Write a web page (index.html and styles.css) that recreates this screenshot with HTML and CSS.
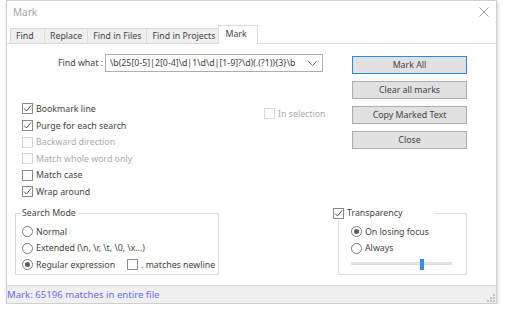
FILE: index.html
```html
<!DOCTYPE html>
<html lang="en">
<head>
    <meta charset="UTF-8">
    <meta name="viewport" content="width=device-width, initial-scale=1.0">
    <title>Mark</title>
    <link rel="stylesheet" href="styles.css">
</head>
<body>

<div class="window">
    <div class="titlebar">
        <span class="title">Mark</span>
        <svg class="close" width="10" height="10" viewBox="0 0 10 10">
            <path d="M0.5 0.5 L9.5 9.5 M9.5 0.5 L0.5 9.5" stroke="#9a9a9a" stroke-width="1" fill="none"/>
        </svg>
    </div>

    <div class="tabs">
        <div class="tab">Find</div>
        <div class="tab">Replace</div>
        <div class="tab">Find in Files</div>
        <div class="tab">Find in Projects</div>
        <div class="tab active">Mark</div>
    </div>

    <div class="panel">
        <div class="top">
            <div class="left">
                <div class="find-row">
                    <label class="find-label">Find what :</label>
                    <div class="combo">
                        <span class="combo-text">\b(25[0-5]|2[0-4]\d|1\d\d|[1-9]?\d)(.(?1)){3}\b</span>
                        <svg class="chevron" width="9" height="5" viewBox="0 0 9 5">
                            <path d="M0.5 0.5 L4.5 4.5 L8.5 0.5" stroke="#707070" stroke-width="1" fill="none"/>
                        </svg>
                    </div>
                </div>

                <div class="options">
                    <div class="checks">
                        <div class="check"><span class="box"><svg width="9" height="9" viewBox="0 0 9 9"><path d="M1 4.5 L3.5 7 L8 1.5" stroke="#555" stroke-width="1" fill="none"/></svg></span>Bookmark line</div>
                        <div class="check"><span class="box"><svg width="9" height="9" viewBox="0 0 9 9"><path d="M1 4.5 L3.5 7 L8 1.5" stroke="#555" stroke-width="1" fill="none"/></svg></span>Purge for each search</div>
                        <div class="check disabled"><span class="box"></span>Backward direction</div>
                        <div class="check disabled"><span class="box"></span>Match whole word only</div>
                        <div class="check"><span class="box"></span>Match case</div>
                        <div class="check"><span class="box"><svg width="9" height="9" viewBox="0 0 9 9"><path d="M1 4.5 L3.5 7 L8 1.5" stroke="#555" stroke-width="1" fill="none"/></svg></span>Wrap around</div>
                    </div>
                    <div class="check disabled in-selection"><span class="box"></span>In selection</div>
                </div>
            </div>

            <div class="buttons">
                <button class="btn default">Mark All</button>
                <button class="btn">Clear all marks</button>
                <button class="btn">Copy Marked Text</button>
                <button class="btn">Close</button>
            </div>
        </div>

        <div class="bottom">
            <fieldset class="group search-mode">
                <legend>Search Mode</legend>
                <div class="radio"><span class="circle"></span>Normal</div>
                <div class="radio"><span class="circle"></span>Extended (\n, \r, \t, \0, \x...)</div>
                <div class="radio-row">
                    <div class="radio wide"><span class="circle on"></span>Regular expression</div>
                    <div class="check"><span class="box"></span>. matches newline</div>
                </div>
            </fieldset>

            <fieldset class="group transparency">
                <legend class="check"><span class="box"><svg width="9" height="9" viewBox="0 0 9 9"><path d="M1 4.5 L3.5 7 L8 1.5" stroke="#555" stroke-width="1" fill="none"/></svg></span>Transparency</legend>
                <div class="radio"><span class="circle on"></span>On losing focus</div>
                <div class="radio"><span class="circle"></span>Always</div>
                <div class="slider-row">
                    <div class="slider">
                        <span class="thumb" style="left: 69%"></span>
                    </div>
                </div>
            </fieldset>
        </div>
    </div>

    <div class="status">
        <span class="status-text">Mark: 65196 matches in entire file</span>
        <svg class="grip" width="8" height="8" viewBox="0 0 8 8">
            <rect x="6" y="0" width="2" height="2" fill="#c4c4c4"/>
            <rect x="3" y="3" width="2" height="2" fill="#c4c4c4"/>
            <rect x="6" y="3" width="2" height="2" fill="#c4c4c4"/>
            <rect x="0" y="6" width="2" height="2" fill="#c4c4c4"/>
            <rect x="3" y="6" width="2" height="2" fill="#c4c4c4"/>
            <rect x="6" y="6" width="2" height="2" fill="#c4c4c4"/>
        </svg>
    </div>
</div>

</body>
</html>
```

FILE: styles.css
```css
body {
    margin: 0;
    background-color: #ffffff;
    font-family: "Noto Sans", sans-serif;
    font-size: 8.8px;
    color: #444;
}
.window {
    margin-left: 6px;
    width: 491px;
    height: 304px;
    box-sizing: border-box;
    border: 1px solid #cfcfcf;
    background-color: #ffffff;
    box-shadow: 1px 2px 4px rgba(0, 0, 0, 0.18);
    display: flex;
    flex-direction: column;
}
.titlebar {
    height: 22px;
    display: flex;
    align-items: center;
    justify-content: space-between;
    padding: 0 7px 0 6px;
}
.title {
    font-size: 10px;
    color: #a6a6a6;
}
.close {
    display: block;
}

/* tab strip */
.tabs {
    height: 20px;
    display: flex;
    align-items: flex-end;
    padding-left: 3px;
    border-bottom: 1px solid #dadada;
}
.tab {
    height: 15px;
    line-height: 14px;
    min-width: 35px;
    padding: 0 5px;
    box-sizing: border-box;
    background-color: #f0f0f0;
    border: 1px solid #dadada;
    border-bottom: none;
    margin-right: -1px;
}
.tab.active {
    height: 19px;
    line-height: 16px;
    min-width: 40px;
    margin: 0 -2px -1px;
    padding: 0 6px;
    background-color: #ffffff;
    position: relative;
}

/* main panel */
.panel {
    flex: 1;
    padding-top: 10px;
}
.top {
    display: flex;
}
.left {
    width: 345px;
}
.find-row {
    display: flex;
    align-items: center;
    height: 18px;
}
.find-label {
    width: 98px;
    padding-right: 2px;
    box-sizing: border-box;
    text-align: right;
}
.combo {
    width: 218px;
    height: 18px;
    box-sizing: border-box;
    border: 1px solid #adadad;
    display: flex;
    align-items: center;
    padding: 0 5px 0 4px;
}
.combo-text {
    flex: 1;
    white-space: nowrap;
    overflow: hidden;
}
.chevron {
    margin-left: 4px;
}
.options {
    display: flex;
    margin-top: 28.7px;
}
.checks {
    width: 257px;
    box-sizing: border-box;
    padding-left: 15px;
}
.in-selection {
    margin-top: 5px;
}
.check, .radio {
    display: flex;
    align-items: center;
    height: 16.6px;
    white-space: nowrap;
}
.box {
    width: 11px;
    height: 11px;
    box-sizing: border-box;
    border: 1px solid #8a8a8a;
    margin-right: 3px;
    display: flex;
    align-items: center;
    justify-content: center;
    flex-shrink: 0;
}
.box svg {
    display: block;
}
.check.disabled {
    color: #ababab;
}
.check.disabled .box {
    border-color: #d6d6d6;
}
.circle {
    width: 11px;
    height: 11px;
    box-sizing: border-box;
    border: 1px solid #7e7e7e;
    border-radius: 50%;
    margin-right: 3px;
    display: flex;
    align-items: center;
    justify-content: center;
    flex-shrink: 0;
}
.circle.on::after {
    content: "";
    width: 5px;
    height: 5px;
    border-radius: 50%;
    background-color: #5f5f5f;
}

/* buttons */
.buttons {
    margin-top: 2px;
    display: flex;
    flex-direction: column;
    gap: 7px;
}
.btn {
    width: 115px;
    height: 18px;
    padding: 0;
    font-family: inherit;
    font-size: 8.8px;
    color: #444;
    background-color: #e1e1e1;
    border: 1px solid #adadad;
}
.btn.default {
    border-color: #2a8ae0;
}

/* group boxes */
.bottom {
    display: flex;
    margin-top: 7.2px;
}
.group {
    margin: 0;
    border: 1px solid #dcdcdc;
    padding: 3px 0 0 6px;
}
.group legend {
    line-height: 13px;
    padding: 0 2px;
    margin-left: -2px;
}
.search-mode {
    margin-left: 8px;
    width: 204px;
    box-sizing: border-box;
    height: 67.5px;
}
.radio-row {
    display: flex;
}
.radio.wide {
    width: 105px;
}
.transparency {
    margin-left: 119px;
    width: 129px;
    box-sizing: border-box;
    height: 67.5px;
    padding-left: 12px;
}
.transparency legend {
    width: 102px;
    box-sizing: border-box;
    margin-left: -18px;
    padding: 0;
    height: 13px;
}
.slider-row {
    height: 16.6px;
}
.slider {
    position: relative;
    width: 101px;
    height: 3px;
    margin-top: 5px;
    background-color: #e7e7e7;
    border: 1px solid #dedede;
    box-sizing: border-box;
}
.thumb {
    position: absolute;
    top: -4px;
    width: 4px;
    height: 11px;
    background-color: #3b8ee6;
}

/* status bar */
.status {
    height: 18px;
    box-sizing: border-box;
    border-top: 1px solid #dddddd;
    background-color: #f0f0f0;
    display: flex;
    align-items: center;
    justify-content: space-between;
    padding-right: 1px;
}
.status-text {
    font-size: 9.6px;
    color: #6b6bf5;
}
.grip {
    align-self: flex-end;
    margin-bottom: 1px;
}
```
